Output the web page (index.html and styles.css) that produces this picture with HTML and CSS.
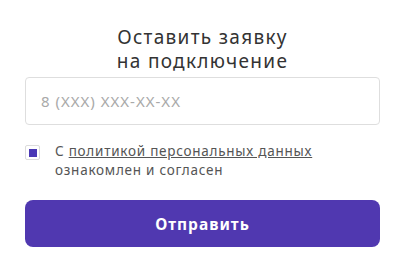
FILE: index.html
```html
<!DOCTYPE html>
<html lang="ru">
<head>
  <meta charset="UTF-8">
  <title>Заявка на подключение</title>
  <link rel="stylesheet" href="styles.css">
</head>
<body>

  <!-- FORM -->
  <div class="request-form">
    <h2 class="form-title">Оставить заявку<br>на подключение</h2>

    <input class="phone-input" type="tel" placeholder="8 (XXX) XXX-XX-XX">

    <label class="agree">
      <span class="agree-box"><span class="agree-mark"></span></span>
      <span class="agree-text">С <a href="#">политикой персональных данных</a> ознакомлен и согласен</span>
    </label>

    <button type="submit" class="submit-btn">Отправить</button>
  </div>

</body>
</html>
```

FILE: styles.css
```css
body {
  margin: 0;
  font-family: 'Noto Sans', 'Open Sans', sans-serif;
  background-color: #ffffff;
  color: #333;
}

.request-form {
  width: 355px;
  padding: 25px 0 0 25px;
}

.form-title {
  margin: 0 0 4px;
  font-size: 19px;
  font-weight: 400;
  line-height: 24px;
  text-align: center;
  color: #333;
  letter-spacing: 1.3px;
}

.phone-input {
  display: block;
  box-sizing: border-box;
  width: 100%;
  height: 48px;
  padding: 0 15px;
  border: 1px solid #dedede;
  border-radius: 4px;
  font-family: inherit;
  font-size: 15px;
  letter-spacing: 1px;
  color: #333;
  outline: none;
}

.phone-input::placeholder {
  color: #a9a9a9;
}

.agree {
  display: flex;
  align-items: flex-start;
  margin-top: 17px;
  cursor: pointer;
}

.agree-box {
  flex: none;
  box-sizing: border-box;
  width: 15px;
  height: 15px;
  margin-top: 3px;
  border: 1px solid #dcdcdc;
  border-radius: 2px;
  display: flex;
  align-items: center;
  justify-content: center;
}

.agree-mark {
  width: 8px;
  height: 8px;
  background-color: #4a38b5;
}

.agree-text {
  margin-left: 15px;
  width: 290px;
  font-size: 13.5px;
  line-height: 19px;
  color: #555;
  letter-spacing: 0.75px;
}

.agree-text a {
  color: #555;
}

.submit-btn {
  display: block;
  width: 100%;
  height: 47px;
  margin-top: 20px;
  border: none;
  border-radius: 8px;
  background-color: #5038b0;
  color: white;
  font-family: inherit;
  font-size: 15.5px;
  font-weight: 700;
  letter-spacing: 1px;
  cursor: pointer;
}
```
